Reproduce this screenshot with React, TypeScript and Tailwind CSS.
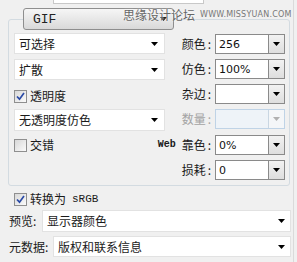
import React from "react";

const Arrow = ({ c = "#000" }: { c?: string }) => (
  <svg width="7" height="4" viewBox="0 0 7 4">
    <path d="M0 0h7L3.5 4z" fill={c} />
  </svg>
);

const Check = ({ checked }: { checked?: boolean }) => (
  <div className="w-[13px] h-[13px] border border-[#8f8f8f] bg-gradient-to-br from-[#d8d8d8] to-[#fbfbfb] flex items-center justify-center shrink-0">
    {checked && (
      <svg width="9" height="9" viewBox="0 0 9 9">
        <path d="M1 4.5 L3.5 7.2 L8 1" stroke="#2a4aa6" strokeWidth="1.7" fill="none" />
      </svg>
    )}
  </div>
);

const LeftSelect = ({ text, h }: { text: string; h: string }) => (
  <div className={`w-[151px] ${h} bg-white border border-[#e2e2e2] flex items-center justify-between pl-[4px] pr-[6px]`}>
    <span className="whitespace-nowrap">{text}</span>
    <Arrow />
  </div>
);

const Combo = ({ value, disabled }: { value?: string; disabled?: boolean }) => (
  <div
    className={`w-[70px] h-[20px] border flex shrink-0 ${
      disabled ? "border-[#bfd3e6] bg-[#eef3f8]" : "border-[#8a8a8a] bg-white"
    }`}
  >
    <div className="flex-1 pl-[3px] flex items-center text-[11px] font-['DejaVu_Sans',sans-serif] text-[#111]">
      {value}
    </div>
    <div
      className={`w-[16px] h-full border-l flex items-center justify-center ${
        disabled ? "border-[#c9d6e2] bg-[#f4f6f8]" : "border-[#8a8a8a] bg-gradient-to-b from-[#f2f2f2] to-[#dedede]"
      }`}
    >
      <Arrow c={disabled ? "#b0b0b0" : "#000"} />
    </div>
  </div>
);

const Row = ({ label, value, disabled, web }: { label: string; value?: string; disabled?: boolean; web?: boolean }) => (
  <div className="h-[20px] flex items-center justify-end gap-[3px]">
    <span className={`flex items-center whitespace-nowrap ${disabled ? "text-[#a3a3a3]" : "text-[#1a1a1a]"}`}>
      {web && <span className="font-['Liberation_Mono',monospace] text-[10px] font-bold mr-[6px]">Web</span>}
      <span>{label}</span>
      <span className="ml-[2px] mr-[1px]">:</span>
    </span>
    <Combo value={value} disabled={disabled} />
  </div>
);

export default function App() {
  return (
    <div className="w-[297px] h-[262px] bg-[#f0f0f0] overflow-hidden relative font-['Noto_Sans_CJK_SC',sans-serif] text-[12px] leading-none text-[#1a1a1a]">
      <div className="absolute z-10 left-[123px] top-[9px] flex items-center gap-[5px] whitespace-nowrap pointer-events-none">
        <span className="text-[12px] text-[#666] [text-shadow:0_0_2px_#fff]">思缘设计论坛</span>
        <span className="text-[8px] text-[#777] font-['DejaVu_Sans',sans-serif] tracking-[0.2px]">WWW.MISSYUAN.COM</span>
      </div>
      <div className="absolute left-[293px] top-0 w-px h-[262px] bg-[#dadada]" />
      <div className="ml-[53px] w-[151px] h-[4px] bg-white border border-t-0 border-[#c8c8c8]" />
      <div className="ml-[8px] mt-[15px] w-[282px] h-[167px] border border-[#d3dbe1] rounded-[3px] flex flex-col">
        <div className="ml-[14px] -mt-[12px] w-[151px] h-[22px] rounded-[3px] border border-[#8e8e8e] bg-gradient-to-b from-[#f6f6f6] to-[#d9d9d9] flex items-center justify-between pl-[9px] pr-[6px]">
          <span className="font-['Liberation_Mono',monospace] text-[13px] text-[#222]">GIF</span>
          <Arrow />
        </div>
        <div className="flex mt-[3px]">
          <div className="ml-[5px] w-[151px] flex flex-col shrink-0">
            <LeftSelect text="可选择" h="h-[21px]" />
            <div className="mt-[5px]">
              <LeftSelect text="扩散" h="h-[21px]" />
            </div>
            <div className="mt-[8px] h-[16px] flex items-center gap-[3px]">
              <Check checked />
              <span>透明度</span>
            </div>
            <div className="mt-[5px]">
              <LeftSelect text="无透明度仿色" h="h-[22px]" />
            </div>
            <div className="mt-[6px] h-[16px] flex items-center gap-[3px]">
              <Check />
              <span>交错</span>
            </div>
          </div>
          <div className="flex-1 min-w-0 mr-[4px] mt-[1px] flex flex-col gap-[5px]">
            <Row label="颜色" value="256" />
            <Row label="仿色" value="100%" />
            <Row label="杂边" />
            <Row label="数量" disabled />
            <div className="mt-[1px]">
              <Row label="靠色" value="0%" web />
            </div>
            <Row label="损耗" value="0" />
          </div>
        </div>
      </div>
      <div className="mt-[5px] ml-[14px] h-[16px] flex items-center gap-[3px]">
        <Check checked />
        <span>转换为</span>
        <span className="font-['Liberation_Mono',monospace] text-[11px] ml-[3px]">sRGB</span>
      </div>
      <div className="mt-[3px] w-[291px] flex items-center">
        <span className="pl-[9px] whitespace-nowrap">预览:</span>
        <div className="ml-auto w-[249px] h-[22px] bg-white border border-[#e2e2e2] flex items-center justify-between pl-[4px] pr-[5px]">
          <span>显示器颜色</span>
          <Arrow />
        </div>
      </div>
      <div className="mt-[4px] w-[291px] flex items-center">
        <span className="pl-[9px] whitespace-nowrap">元数据:</span>
        <div className="ml-auto w-[238px] h-[21px] bg-white border border-[#e2e2e2] flex items-center justify-between pl-[4px] pr-[5px]">
          <span>版权和联系信息</span>
          <Arrow />
        </div>
      </div>
    </div>
  );
}
